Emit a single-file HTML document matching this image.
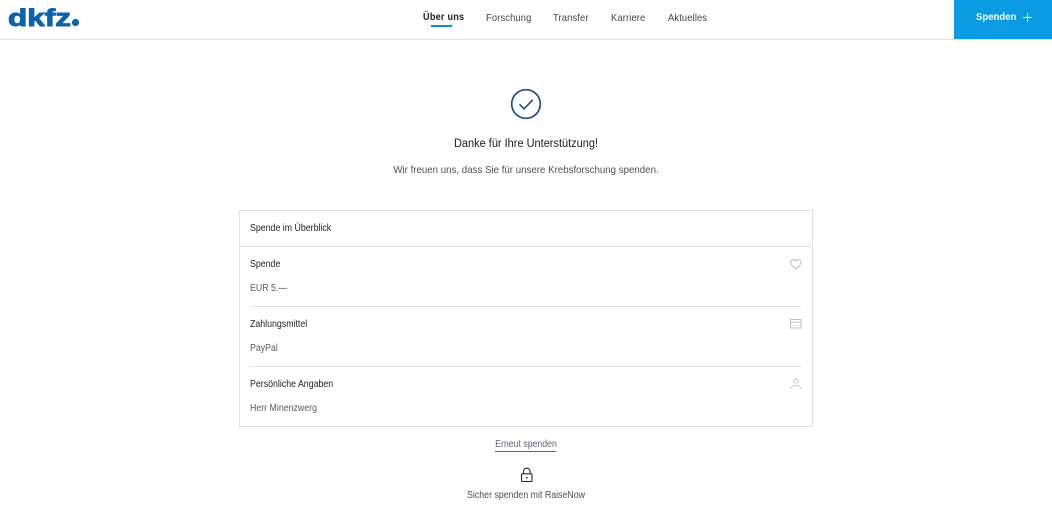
<!DOCTYPE html>
<html lang="de">
<head>
<meta charset="utf-8">
<title>Danke</title>
<style>
html,body{margin:0;padding:0;background:#fff}
body{width:1052px;height:505px;position:relative;overflow:hidden;font-family:"Liberation Sans",sans-serif;color:#222}
.t{position:absolute;white-space:nowrap;font-size:10px;line-height:12px;transform-origin:0 50%;transform:scaleX(.88)}
.n{font-size:10.5px;color:#444;top:11.5px;transform:scaleX(.89);letter-spacing:.16px}
.d{color:#5a5a62}
.c{transform-origin:50% 50%}
.l{position:absolute;background:#e0e0e0}
svg{position:absolute;overflow:visible}
</style>
</head>
<body>
<div class="l" style="left:0;top:39px;width:1052px;height:1px;background:#e2e2e2"></div>

<svg style="left:0;top:0" width="100" height="40"><text x="8" y="26" font-family="Liberation Sans" font-weight="700" font-size="24" fill="#0b62ac" stroke="#0b62ac" stroke-width=".9" textLength="63" lengthAdjust="spacingAndGlyphs">dkfz</text><circle cx="75.500" cy="22.500" r="3.600" fill="#0b62ac"/></svg>

<span class="t" style="left:423px;top:11px;font-size:10.5px;font-weight:700;color:#222;letter-spacing:.25px;transform:scaleX(.87)">Über uns</span>
<div class="l" style="left:431px;top:25px;width:21px;height:2px;background:#0a88d8"></div>
<span class="t n" style="left:486px">Forschung</span>
<span class="t n" style="left:553px">Transfer</span>
<span class="t n" style="left:610.500px">Karriere</span>
<span class="t n" style="left:667.500px">Aktuelles</span>

<div class="l" style="left:954px;top:0;width:98px;height:39px;background:#0a9be3"></div>
<span class="t" style="left:976px;top:10.500px;font-size:10.500px;font-weight:700;color:#fff;transform:scaleX(.91)">Spenden</span>
<svg style="left:1023px;top:12.500px" width="10" height="10"><path d="M4.500 0V9M0 4.500H9" stroke="#fff" stroke-width="1" fill="none"/></svg>

<svg style="left:510px;top:88px" width="32" height="32"><circle cx="16" cy="16" r="14.300" fill="none" stroke="#1d4f80" stroke-width="1.700"/><path d="M9.500 16.200l4.600 4.600 8.600-9" fill="none" stroke="#1d4f80" stroke-width="1.600"/></svg>

<span class="t c" style="left:526px;top:137px;font-size:11.500px;line-height:14px;color:#1c1c1c;transform:translateX(-50%) scaleX(.955)">Danke für Ihre Unterstützung!</span>
<span class="t c" style="left:526px;top:164px;font-size:10.500px;line-height:13px;color:#4f4f55;transform:translateX(-50%) scaleX(.924)">Wir freuen uns, dass Sie für unsere Krebsforschung spenden.</span>

<div style="position:absolute;left:239px;top:210px;width:572px;height:215px;border:1px solid #e0e0e0"></div>
<div class="l" style="left:240px;top:246px;width:572px;height:1px"></div>
<div class="l" style="left:250px;top:306px;width:551px;height:1px"></div>
<div class="l" style="left:250px;top:366px;width:551px;height:1px"></div>

<span class="t" style="left:250px;top:222.500px">Spende im Überblick</span>
<span class="t" style="left:250px;top:258.500px">Spende</span>
<span class="t d" style="left:250px;top:282.500px">EUR 5.—</span>
<span class="t" style="left:250px;top:318.500px">Zahlungsmittel</span>
<span class="t d" style="left:250px;top:342.500px">PayPal</span>
<span class="t" style="left:250px;top:378.500px">Persönliche Angaben</span>
<span class="t d" style="left:250px;top:402.500px">Herr Minenzwerg</span>

<svg style="left:790px;top:258.500px" width="12" height="11"><path d="M5.750 9.800C2.700 7.600.5 5.800.5 3.400.5 1.800 1.700.5 3.200.5c1.100 0 2 .6 2.550 1.600C6.300 1.100 7.200.5 8.300.5c1.500 0 2.700 1.300 2.700 2.900 0 2.400-2.200 4.200-5.250 6.400z" fill="none" stroke="#c0c0c0" stroke-width="1"/></svg>
<svg style="left:790px;top:319px" width="12" height="10"><rect x=".5" y=".5" width="10.500" height="8.500" fill="none" stroke="#c0c0c0"/><path d="M.5 3.200H11" stroke="#c0c0c0"/><path d="M2 6.500H9.500" stroke="#e0e0e0"/></svg>
<svg style="left:790px;top:378px" width="12" height="12"><circle cx="5.750" cy="2.800" r="2.200" fill="none" stroke="#c8c8c8"/><path d="M.5 10.800C1.500 8.300 3.500 7.300 5.750 7.300s4.250 1 5.250 3.500" fill="none" stroke="#c8c8c8"/></svg>

<span class="t c" style="left:525.500px;top:439px;color:#5d6570;transform:translateX(-50%) scaleX(.875)">Erneut spenden</span>
<div class="l" style="left:495px;top:451px;width:61px;height:1px;background:#4d6a8c"></div>

<svg style="left:519.500px;top:466.500px" width="14" height="16"><path d="M3.500 7V4.500a3.300 3.300 0 0 1 6.600 0V7" fill="none" stroke="#2a2a2a" stroke-width="1.100"/><rect x="1.500" y="6.800" width="10.500" height="7.700" rx="1" fill="none" stroke="#2a2a2a" stroke-width="1.100"/><rect x="6" y="10" width="1.500" height="1.500" fill="#2a2a2a"/></svg>

<span class="t c" style="left:525.500px;top:490px;color:#4f4f55;transform:translateX(-50%) scaleX(.88)">Sicher spenden mit RaiseNow</span>
</body>
</html>
